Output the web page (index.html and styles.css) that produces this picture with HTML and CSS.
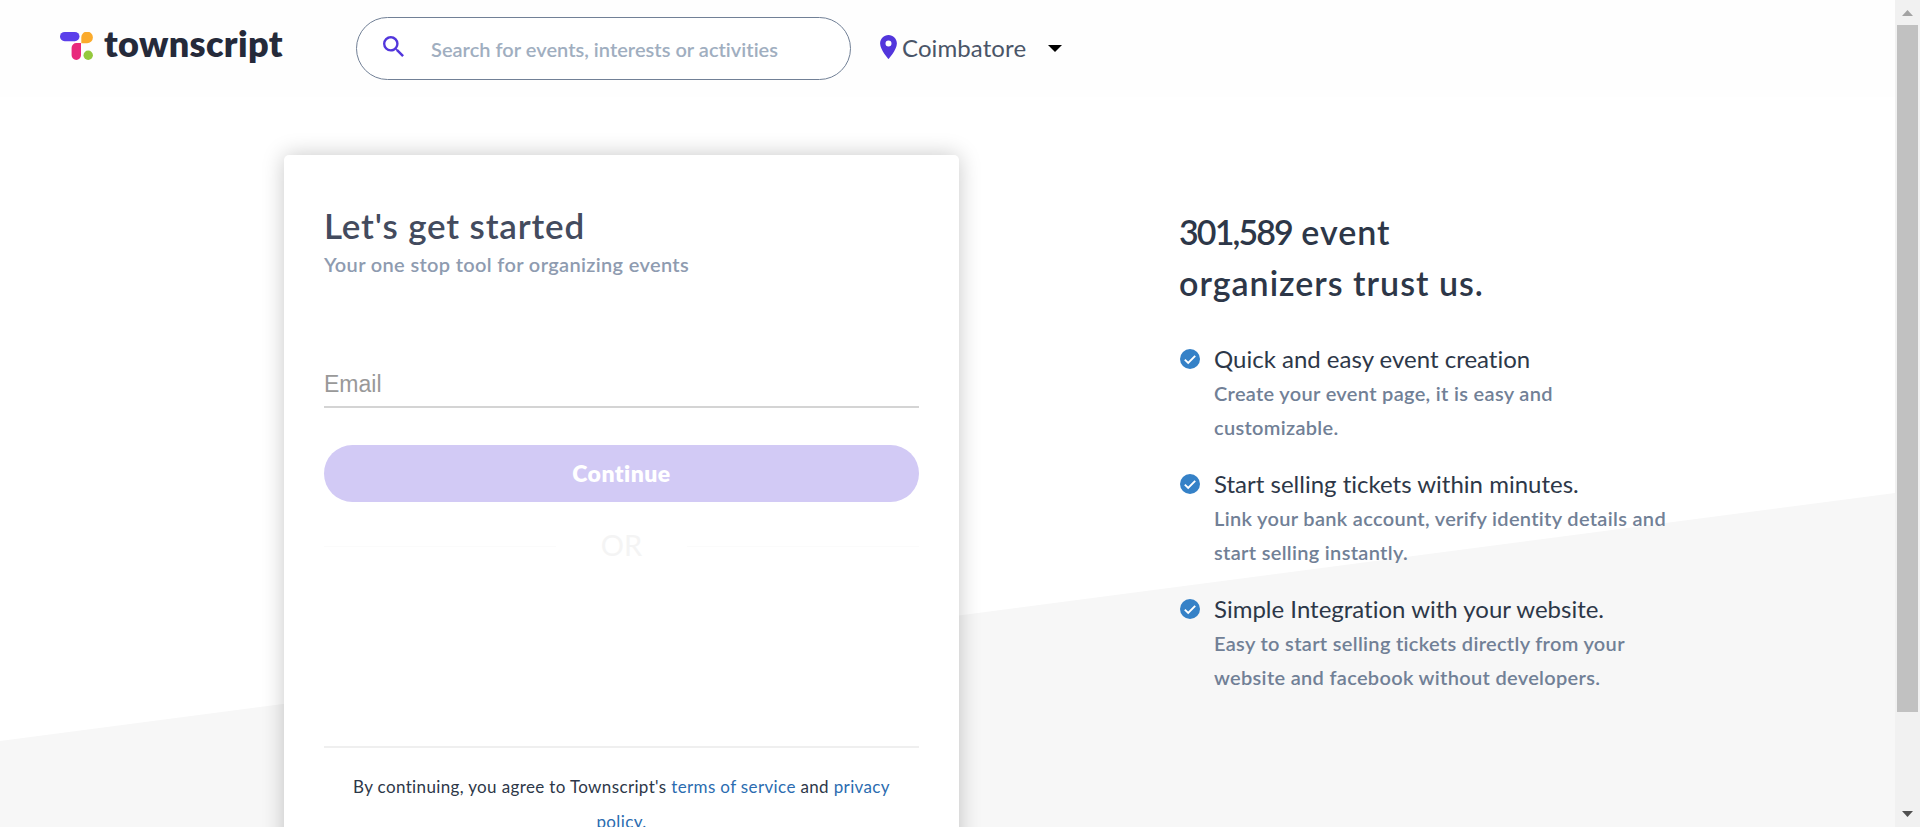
FILE: index.html
```html
<!DOCTYPE html>
<html lang="en">
<head>
<meta charset="utf-8">
<title>Townscript</title>
<link rel="stylesheet" href="styles.css">
</head>
<body>
<div class="window">
  <div class="page">
    <svg class="slope" viewBox="0 0 1895 827" aria-hidden="true"><path d="M0 741L1895 493V827H0z" fill="#f7f7f7"/></svg>
    <header class="header">
      <a class="logo">
        <svg class="logo-mark" width="34" height="28" viewBox="0 0 34 28"><rect width="19.5" height="9.2" rx="4.6" fill="#5b3fea"/><path d="M21.3 11.2V5.7a5.8 5.8 0 1 1 5.8 5.5z" fill="#fbab2c"/><path d="M16.4 11H21v12.2a4.7 4.7 0 0 1-9.4 0v-7.4a4.8 4.8 0 0 1 4.8-4.8z" fill="#e8297c"/><circle cx="28.2" cy="23.2" r="4.7" fill="#94c83d"/></svg>
        <span class="logo-text">townscript</span>
      </a>
      <div class="search">
        <svg class="search-icon" width="21" height="21" viewBox="3 3 17.5 17.5"><path fill="#5236dc" d="M15.5 14h-.79l-.28-.27A6.47 6.47 0 0 0 16 9.5 6.5 6.5 0 1 0 9.5 16c1.61 0 3.09-.59 4.23-1.57l.27.28v.79l5 4.99L20.49 19zm-6 0C7.01 14 5 11.99 5 9.5S7.01 5 9.5 5 14 7.01 14 9.5 11.99 14 9.5 14z"/></svg>
        <span class="search-text">Search for events, interests or activities</span>
      </div>
      <div class="city">
        <svg class="pin" width="17" height="24" viewBox="5 2 14 20"><path fill="#5236dc" d="M12 2C8.13 2 5 5.13 5 9c0 5.25 7 13 7 13s7-7.75 7-13c0-3.87-3.13-7-7-7zm0 9.5a2.5 2.5 0 1 1 0-5 2.5 2.5 0 0 1 0 5z"/></svg>
        <span class="city-name">Coimbatore</span>
        <svg class="caret" width="14" height="7" viewBox="0 0 14 7"><path d="M0 0h14L7 7z"/></svg>
      </div>
    </header>
    <main class="main">
      <section class="card">
        <h1 class="card-title">Let's get started</h1>
        <p class="card-sub">Your one stop tool for organizing events</p>
        <div class="field">Email</div>
        <button class="continue">Continue</button>
        <div class="or"><span>OR</span></div>
        <p class="terms">By continuing, you agree to Townscript's <a>terms of service</a> and <a>privacy</a><br><a>policy.</a></p>
      </section>
      <section class="pitch">
        <h2 class="pitch-title"><span class="count">301,589</span> event<br>organizers trust us.</h2>
        <ul class="points">
          <li class="point">
            <svg class="tick" width="20" height="20" viewBox="2 2 20 20"><circle cx="12" cy="12" r="10" fill="#3581c7"/><path d="M6.8 12.6l3.4 3.4 7-7.2" fill="none" stroke="#fff" stroke-width="1.9"/></svg>
            <div><h3 class="point-title">Quick and easy event creation</h3><p class="point-text">Create your event page, it is easy and<br>customizable.</p></div>
          </li>
          <li class="point">
            <svg class="tick" width="20" height="20" viewBox="2 2 20 20"><circle cx="12" cy="12" r="10" fill="#3581c7"/><path d="M6.8 12.6l3.4 3.4 7-7.2" fill="none" stroke="#fff" stroke-width="1.9"/></svg>
            <div><h3 class="point-title">Start selling tickets within minutes.</h3><p class="point-text">Link your bank account, verify identity details and<br>start selling instantly.</p></div>
          </li>
          <li class="point">
            <svg class="tick" width="20" height="20" viewBox="2 2 20 20"><circle cx="12" cy="12" r="10" fill="#3581c7"/><path d="M6.8 12.6l3.4 3.4 7-7.2" fill="none" stroke="#fff" stroke-width="1.9"/></svg>
            <div><h3 class="point-title">Simple Integration with your website.</h3><p class="point-text">Easy to start selling tickets directly from your<br>website and facebook without developers.</p></div>
          </li>
        </ul>
      </section>
    </main>
  </div>
  <div class="scrollbar"><svg width="11" height="6" viewBox="0 0 11 6"><path d="M5.5 0L11 6H0z" fill="#a3a3a3"/></svg><div class="thumb"></div><svg class="down" width="11" height="6" viewBox="0 0 11 6"><path d="M0 0h11L5.5 6z" fill="#505050"/></svg></div>
</div>
</body>
</html>
```
FILE: styles.css
```css
* { box-sizing: border-box; margin: 0; padding: 0; }
body { font-family: Lato, "Open Sans", sans-serif; font-variant-ligatures: none; background: #fff; overflow: hidden; color: #2d3748; }
.window { display: grid; grid-template-columns: 1895px 25px; height: 827px; overflow: hidden; }
.page { position: relative; height: 827px; overflow: hidden; }
.slope { position: absolute; left: 0; top: 0; width: 1895px; height: 827px; }
.header { position: relative; display: flex; align-items: flex-start; height: 97px; padding-left: 60px; background: #fefefe; }
.logo { display: flex; width: 296px; }
.logo-mark { margin-top: 32px; }
.logo-text { margin: 21px 0 0 10px; font-size: 36px; line-height: 44px; font-weight: 800; letter-spacing: .35px; color: #252a3a; }
.search { display: flex; width: 495px; height: 63px; margin-top: 17px; border: 1px solid #718096; border-radius: 32px; background: #fff; }
.search-icon { margin: 18px 0 0 26px; }
.search-text { margin: 15px 0 0 27px; font-size: 20px; line-height: 32px; font-weight: 600; letter-spacing: .025px; color: #a0aec0; white-space: nowrap; }
.city { display: flex; margin-left: 29px; }
.pin { margin-top: 35px; }
.city-name { margin: 31px 0 0 5px; font-size: 24px; line-height: 34px; letter-spacing: .1px; color: #4a5568; }
.caret { margin: 45px 0 0 22px; }
.main { position: relative; display: flex; align-items: flex-start; padding: 58px 0 0 284px; }
.card { width: 675px; height: 760px; padding: 49px 40px 0; border-radius: 5px; background: #fff; box-shadow: 0 0 22px rgba(0,0,0,.22); }
.card-title { font-size: 35px; line-height: 42px; font-weight: 600; letter-spacing: .84px; color: #434b5e; }
.card-sub { margin-top: 2px; font-size: 20px; line-height: 32px; font-weight: 600; letter-spacing: .34px; color: #8e9bb0; }
.field { height: 54px; margin-top: 74px; border-bottom: 2px solid #d4d4d4; font: 23px/48px "Liberation Sans", sans-serif; color: #999; padding-top: 6px; }
.continue { display: block; width: 595px; height: 57px; margin-top: 37px; border: 0; border-radius: 29px; background: #d2caf5; color: #fff; font: 800 23px/57px Lato, sans-serif; font-variant-ligatures: none; letter-spacing: .45px; }
.or { display: grid; grid-template-columns: 232px 1fr 232px; align-items: center; margin-top: 22px; height: 44px; text-align: center; font-size: 29px; color: #f4f4f4; }
.or::before, .or::after { content: ""; height: 1px; background: #fbfbfb; }
.or span { line-height: 40px; margin-top: -2px; }
.terms { margin-top: 178px; border-top: 2px solid #efefef; padding-top: 21px; font-size: 17px; line-height: 35px; text-align: center; letter-spacing: .363px; color: #2d3748; white-space: nowrap; }
.terms a { color: #2b6cb0; }
.pitch { margin: 51px 0 0 220px; }
.pitch-title { font-size: 34px; line-height: 51px; font-weight: 600; letter-spacing: 1px; color: #2d3748; }
.count { letter-spacing: -1.9px; }
.points { list-style: none; margin-top: 34px; }
.point { display: flex; gap: 14px; height: 125px; padding-left: 1px; }
.tick { margin-top: 7px; }
.point-title { font-size: 24px; line-height: 34px; font-weight: 400; color: #2d3748; white-space: nowrap; }
.point-text { font-size: 20px; line-height: 34px; font-weight: 600; letter-spacing: .315px; color: #718096; white-space: nowrap; }
.scrollbar { display: flex; flex-direction: column; align-items: center; padding-top: 10px; height: 827px; background: #f1f1f1; }
.thumb { width: 21px; height: 687px; margin-top: 9px; background: #c1c1c1; }
.down { margin-top: 99px; }
```
